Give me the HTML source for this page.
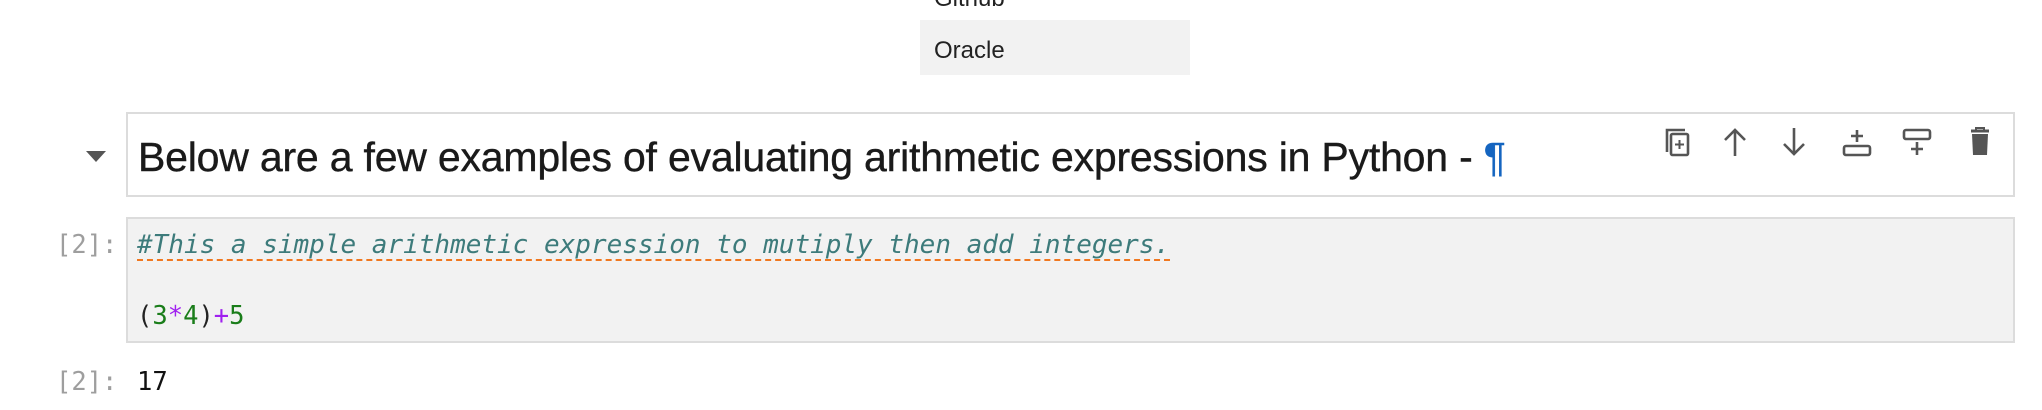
<!DOCTYPE html>
<html><head><style>
body{margin:0;width:2042px;height:410px;background:#fff;position:relative;overflow:hidden;font-family:"Liberation Sans",sans-serif}
.abs{position:absolute}
.mono{font-family:"DejaVu Sans Mono","Liberation Mono",monospace;font-size:25.5px}
.prompt{color:#9e9e9e;left:56px}
</style></head><body>
<div class="abs" style="left:934px;top:-15px;font-size:24px;color:#222">Github</div>
<div class="abs" style="left:920px;top:20px;width:270px;height:55px;background:#f2f2f2"></div>
<div class="abs" style="left:934px;top:37px;font-size:24px;color:#222">Oracle</div>

<div class="abs" style="left:86px;top:151px;width:0;height:0;border-left:10px solid transparent;border-right:10px solid transparent;border-top:11px solid #555"></div>
<div class="abs" style="left:126px;top:112px;width:1885px;height:81px;border:2px solid #dcdcdc;background:#fff"></div>
<div class="abs" style="left:138px;top:134px;font-size:41px;color:#1a1a1a;white-space:nowrap;letter-spacing:-0.2px;-webkit-text-stroke:0.4px #1a1a1a">Below are a few examples of evaluating arithmetic expressions in Python - <span style="color:#1565c0;-webkit-text-stroke:0.4px #1565c0">¶</span></div>

<svg class="abs" style="left:1660px;top:124px" width="340" height="36" viewBox="0 0 340 36" fill="none" stroke="#555" stroke-width="2.6">
 <path d="M7 28V6h18"/><rect x="11" y="10" width="17" height="21" rx="1.5"/><path d="M19.5 16v9M15 20.5h9" stroke-width="2"/>
 <path d="M75 32V6M65 16l10-10 10 10"/>
 <path d="M134 4v26M124 20l10 10 10-10"/>
 <rect x="184" y="22" width="26" height="9" rx="2"/><path d="M197 6v12M191 12h12"/>
 <rect x="244" y="6" width="26" height="9" rx="2"/><path d="M257 18v13M251 25h12"/>
 <path d="M311 7h18" stroke-width="3"/><path d="M316 6V4h8v2" stroke-width="2"/><path d="M312 10h16l-1 21h-14z" fill="#555" stroke="none"/>
</svg>

<div class="abs" style="left:126px;top:217px;width:1885px;height:122px;border:2px solid #dcdcdc;background:#f2f2f2"></div>
<div class="abs mono prompt" style="top:230px">[2]:</div>
<div class="abs mono" style="left:137px;top:230px;color:#3d7b7b;font-style:italic;white-space:nowrap;text-decoration:underline dashed #f07820;text-underline-offset:6px;text-decoration-thickness:2px;font-size:26px">#This a simple arithmetic expression to mutiply then add integers.</div>
<div class="abs mono" style="left:137px;top:301px;white-space:nowrap;color:#222">(<span style="color:#1a7d1a">3</span><span style="color:#a020f0">*</span><span style="color:#1a7d1a">4</span>)<span style="color:#a020f0">+</span><span style="color:#1a7d1a">5</span></div>
<div class="abs mono prompt" style="top:367px">[2]:</div>
<div class="abs mono" style="left:137px;top:367px;color:#111">17</div>
</body></html>
